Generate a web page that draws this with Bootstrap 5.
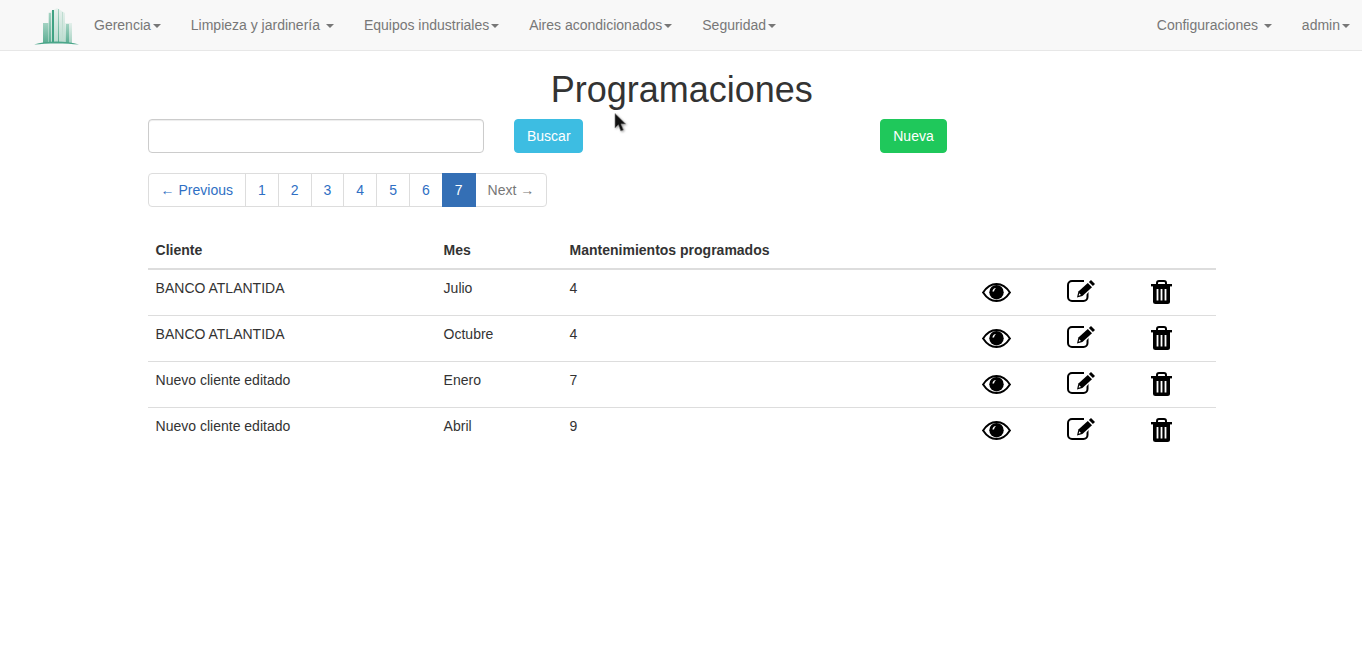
<!DOCTYPE html>
<html lang="es">
<head>
<meta charset="UTF-8">
<meta name="viewport" content="width=device-width, initial-scale=1.0">
<title>Programaciones</title>
<link href="https://cdn.jsdelivr.net/npm/bootstrap@5.3.0/dist/css/bootstrap.min.css" rel="stylesheet">
<style>
  body { font-family: "Liberation Sans", Arial, sans-serif; font-size: 14px; line-height: 20px; color: #333; background: #fff; }
  .top-bar { background: #f8f8f8; border-bottom: 1px solid #e7e7e7; height: 51px; padding: 0; }
  .top-bar .container-fluid { padding: 0; align-items: flex-start; flex-wrap: nowrap; }
  .top-bar .navbar-brand { padding: 0; margin: 7px 0 0 34px; line-height: 0; }
  .top-bar .navbar-nav { flex-direction: row; }
  .top-bar .nav-link { color: #777; padding: 15px; font-size: 14px; line-height: 20px; white-space: nowrap; }
  .top-bar .dropdown-toggle::after { margin-left: 2px; vertical-align: 2px; border-top: 4px solid; border-right: 4px solid transparent; border-left: 4px solid transparent; border-bottom: 0; }
  .top-bar .acct-link { padding-right: 12px; }
  .page-wrap { width: 1068.4px; margin-left: 147.6px; }
  .page-title { font-size: 36px; line-height: 39.6px; font-weight: 500; margin: 19px 0 9px; text-align: center; color: #333; font-family: "Liberation Sans", Arial, sans-serif; }
  .search-input { width: 336.4px; height: 34px; border: 1px solid #ccc; border-radius: 4px; box-shadow: inset 0 1px 1px rgba(0,0,0,.075); padding: 6px 12px; font-size: 14px; }
  .btn-buscar, .btn-nueva { height: 34px; padding: 6px 12px; font-size: 14px; line-height: 20px; color: #fff; border-radius: 4px; }
  .btn-buscar { background: #3dbde2; border: 1px solid #3dbde2; margin-left: 30px; width: 69px; }
  .btn-nueva { background: #1fc85b; border: 1px solid #1fc85b; margin-left: 297px; width: 67px; }
  .pager-row { margin: 20px 0 24px; }
  .pager-row .pagination { --bs-pagination-border-radius: 4px; }
  .pager-row .page-link { padding: 6px 12px; font-size: 14px; line-height: 20px; color: #2f6fc4; border-color: #ddd; height: 34px; }
  .pager-row .page-item.active .page-link { background: #346fb5; border-color: #346fb5; color: #fff; }
  .pager-row .page-item.disabled .page-link { color: #777; background: #fff; }
  .prog-table { width: 1068px; table-layout: fixed; margin: 0; color: #333; }
  .prog-table th { padding: 8px; line-height: 20px; border-top: 0; border-bottom: 2px solid #ddd; height: 38px; font-weight: 700; }
  .prog-table td { padding: 8px; line-height: 20px; height: 46px; border-top: 1px solid #ddd; border-bottom: 0; vertical-align: top; color: #333; }
  .prog-table tbody tr:first-child td { border-top: 0; height: 47px; }
  .w-cliente { width: 288px; }
  .w-mes { width: 126px; }
  .w-mant { width: 412px; }
  .w-act { width: 84px; }
  .w-last { width: 74px; }
  .act-icon { display: block; fill: #000; }
  .eye-drop { margin-top: 5px; }
  .icon-drop { margin-top: 2px; margin-left: 1px; }
  .cursor-mark { position: absolute; left: 614px; top: 113px; filter: drop-shadow(1px 1px 1px rgba(0,0,0,.35)); }
</style>
</head>
<body>
<nav class="navbar top-bar">
  <div class="container-fluid d-flex">
    <a class="navbar-brand" href="#">
      <svg width="45" height="38" viewBox="0 0 45 38">
        <defs>
          <linearGradient id="bld" x1="0" y1="0" x2="0" y2="1">
            <stop offset="0" stop-color="#e4f0eb"/>
            <stop offset="1" stop-color="#a5d2c2"/>
          </linearGradient>
          <linearGradient id="bld2" x1="0" y1="0" x2="0" y2="1">
            <stop offset="0" stop-color="#a3d2c2"/>
            <stop offset="1" stop-color="#5cae93"/>
          </linearGradient>
        </defs>
        <rect x="9" y="16" width="6" height="20" fill="url(#bld2)"/>
        <rect x="31" y="16" width="7" height="20" fill="url(#bld)"/>
        <rect x="32" y="17" width="3" height="19" fill="url(#bld2)"/>
        <polygon points="14,6 23,1 31,6 31,36 14,36" fill="url(#bld)" opacity=".75"/>
        <rect x="18" y="3" width="2" height="33" fill="#3fa283"/>
        <rect x="15" y="6" width="2" height="30" fill="url(#bld2)"/>
        <rect x="24" y="2" width="1" height="34" fill="url(#bld2)"/>
        <rect x="28" y="5" width="1" height="31" fill="#bfddd1"/>
        <path d="M0 37.5C12 33.5 33 33.5 45 37.5C32 36 13 36 0 37.5Z" fill="#4ba68a"/>
      </svg>
    </a>
    <ul class="navbar-nav">
      <li class="nav-item"><a class="nav-link dropdown-toggle" href="#">Gerencia</a></li>
      <li class="nav-item"><a class="nav-link dropdown-toggle" href="#">Limpieza y jardinería </a></li>
      <li class="nav-item"><a class="nav-link dropdown-toggle" href="#">Equipos industriales</a></li>
      <li class="nav-item"><a class="nav-link dropdown-toggle" href="#">Aires acondicionados</a></li>
      <li class="nav-item"><a class="nav-link dropdown-toggle" href="#">Seguridad</a></li>
    </ul>
    <ul class="navbar-nav ms-auto">
      <li class="nav-item"><a class="nav-link dropdown-toggle" href="#">Configuraciones </a></li>
      <li class="nav-item"><a class="nav-link dropdown-toggle acct-link" href="#">admin</a></li>
    </ul>
  </div>
</nav>

<div class="page-wrap">
  <h1 class="page-title">Programaciones</h1>
  <form class="d-flex">
    <input class="form-control search-input" type="text">
    <button class="btn btn-buscar" type="button">Buscar</button>
    <button class="btn btn-nueva" type="button">Nueva</button>
  </form>
  <nav class="pager-row">
    <ul class="pagination mb-0">
      <li class="page-item"><a class="page-link" href="#">← Previous</a></li>
      <li class="page-item"><a class="page-link" href="#">1</a></li>
      <li class="page-item"><a class="page-link" href="#">2</a></li>
      <li class="page-item"><a class="page-link" href="#">3</a></li>
      <li class="page-item"><a class="page-link" href="#">4</a></li>
      <li class="page-item"><a class="page-link" href="#">5</a></li>
      <li class="page-item"><a class="page-link" href="#">6</a></li>
      <li class="page-item active"><a class="page-link" href="#">7</a></li>
      <li class="page-item disabled"><a class="page-link" href="#">Next →</a></li>
    </ul>
  </nav>
  <svg width="0" height="0" class="d-block">
    <defs>
      <symbol id="ic-eye" viewBox="0 0 29 19">
        <path d="M1.1 9.5C4.8 3.8 9.2 1 14.5 1S24.2 3.8 27.9 9.5C24.2 15.2 19.8 18 14.5 18S4.8 15.2 1.1 9.5Z" fill="#fff" stroke="#000" stroke-width="2"/>
        <circle cx="14.5" cy="9.2" r="7.2" fill="#000"/>
        <path d="M10.4 8.6C10.6 6.6 12 5.2 14 5C13 5.8 12.4 6.8 12 8.6Z" fill="#fff"/>
      </symbol>
      <symbol id="ic-edit" viewBox="0 0 28 22">
        <path d="M17 1H5A4 4 0 0 0 1 5V17A4 4 0 0 0 5 21H16.5A4 4 0 0 0 20.5 17V10" fill="none" stroke="#000" stroke-width="2"/>
        <path d="M8.6 19L10.2 10.6L21.4 .6L27 6.4L16.4 17.4Z" fill="#fff"/>
        <path d="M10 17.4L11.4 11.6L20.8 3L25 7.2L15.4 16Z" fill="#000"/>
        <path d="M21.9 2L24 0L28 4L25.9 6.1Z" fill="#000"/>
        <path d="M11.6 15.8L12.3 13.3L14 15Z" fill="#fff"/>
      </symbol>
      <symbol id="ic-trash" viewBox="0 0 21 24">
        <path d="M6 4.5V3A2 2 0 0 1 8 1H13A2 2 0 0 1 15 3V4.5" fill="none" stroke="#000" stroke-width="2"/>
        <rect x="0" y="4" width="21" height="2.4" fill="#000"/>
        <path d="M2 6H19V21.5A2.5 2.5 0 0 1 16.5 24H4.5A2.5 2.5 0 0 1 2 21.5Z" fill="#000"/>
        <rect x="5.6" y="9" width="1.8" height="11.5" fill="#fff"/>
        <rect x="9.6" y="9" width="1.8" height="11.5" fill="#fff"/>
        <rect x="13.6" y="9" width="1.8" height="11.5" fill="#fff"/>
      </symbol>
    </defs>
  </svg>
  <table class="table prog-table">
    <thead>
      <tr>
        <th class="w-cliente">Cliente</th>
        <th class="w-mes">Mes</th>
        <th class="w-mant">Mantenimientos programados</th>
        <th class="w-act"></th>
        <th class="w-act"></th>
        <th class="w-last"></th>
      </tr>
    </thead>
    <tbody id="rows"></tbody>
  </table>
</div>

<svg class="cursor-mark" width="13" height="20" viewBox="0 0 13 20">
  <path d="M1 .5V15L4.4 11.8L6.8 18L9.4 17L7 10.9H11.6Z" fill="#111" stroke="#888" stroke-width=".6"/>
</svg>

<script src="https://cdn.jsdelivr.net/npm/bootstrap@5.3.0/dist/js/bootstrap.bundle.min.js"></script>
<script>
  const rows = [
    ['BANCO ATLANTIDA', 'Julio', 4],
    ['BANCO ATLANTIDA', 'Octubre', 4],
    ['Nuevo cliente editado', 'Enero', 7],
    ['Nuevo cliente editado', 'Abril', 9]
  ];
  document.getElementById('rows').innerHTML = rows.map(r => `
    <tr>
      <td>${r[0]}</td>
      <td>${r[1]}</td>
      <td>${r[2]}</td>
      <td><svg class="act-icon eye-drop" width="29" height="19"><use href="#ic-eye"/></svg></td>
      <td><svg class="act-icon icon-drop" width="28" height="22"><use href="#ic-edit"/></svg></td>
      <td><svg class="act-icon icon-drop" width="21" height="24"><use href="#ic-trash"/></svg></td>
    </tr>`).join('');
</script>
</body>
</html>
